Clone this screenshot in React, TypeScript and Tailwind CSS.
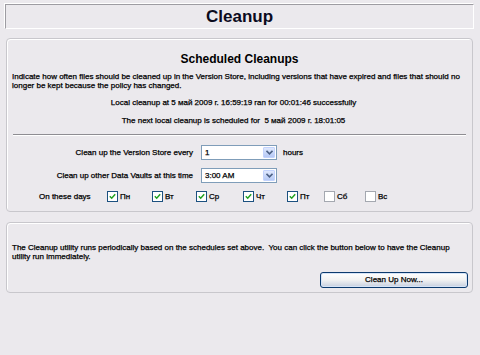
import React from 'react';

const days = [
  { label: 'Пн', checked: true, w: 'w-[45px]' },
  { label: 'Вт', checked: true, w: 'w-[44px]' },
  { label: 'Ср', checked: true, w: 'w-[47px]' },
  { label: 'Чт', checked: true, w: 'w-[44px]' },
  { label: 'Пт', checked: true, w: 'w-[37px]' },
  { label: 'Сб', checked: false, w: 'w-[41px]' },
  { label: 'Вс', checked: false, w: 'w-[30px]' },
];

const Select = ({ value }: { value: string }) => (
  <div className="flex h-[15px] w-[76px] border border-[#7f9db9] bg-white">
    <div className="flex flex-1 items-center pl-[3px] leading-none">{value}</div>
    <div className="m-[1px] flex w-[12px] items-center justify-center rounded-[1px] border border-[#c3d3fd] bg-gradient-to-b from-[#dfe8fd] to-[#b6c9f5]">
      <svg width="7" height="5" viewBox="0 0 7 5">
        <path d="M0.5 0.8 L3.5 3.8 L6.5 0.8" fill="none" stroke="#4d6185" strokeWidth="1.6" />
      </svg>
    </div>
  </div>
);

const Check = ({ checked }: { checked: boolean }) => (
  <div
    className={`flex h-[11px] w-[11px] items-center justify-center border bg-white ${
      checked ? 'border-[#1c5180]' : 'border-[#a4a8b0]'
    }`}
  >
    {checked && (
      <svg width="7" height="7" viewBox="0 0 7 7">
        <path d="M0.8 3.2 L2.7 5.2 L6.2 1.2" fill="none" stroke="#21a121" strokeWidth="1.5" />
      </svg>
    )}
  </div>
);

const App: React.FC = () => {
  return (
    <div className="h-[355px] w-[480px] overflow-hidden bg-[#ebe9ed] pt-[4px] font-['Liberation_Sans',Arial,sans-serif] text-[8px] text-black [-webkit-text-stroke:0.25px_#000]">
      {/* page title */}
      <div className="ml-[5px] flex h-[25px] w-[469px] items-center justify-center border border-t-[#9d9ca2] border-l-[#9d9ca2] border-b-white border-r-white shadow-[-1px_-1px_0_#ffffff] text-[17px] font-bold leading-none text-[#0b0b1e] [-webkit-text-stroke:0px]">
        Cleanup
      </div>

      {/* scheduled cleanups */}
      <div className="ml-[6px] mt-[9px] w-[467px] rounded-[4px] border border-[#c8c7cc] pb-[8px] shadow-[inset_1px_1px_0_#ffffff]">
        <div className="mt-[13px] h-[14px] text-center text-[12px] font-bold leading-[14px] [-webkit-text-stroke:0px]">Scheduled Cleanups</div>
        <p className="mt-[6px] px-[5px] leading-[9px]">
          Indicate how often files should be cleaned up in the Version Store, including versions that have expired and files that should no longer be kept because the policy has changed.
        </p>
        <div className="mt-[8px] pr-[12px] text-center leading-[9px]">
          Local cleanup at 5 май 2009 г. 16:59:19 ran for 00:01:46 successfully
        </div>
        <div className="mt-[9px] pr-[12px] text-center leading-[9px] whitespace-pre">
          The next local cleanup is scheduled for  5 май 2009 г. 18:01:05
        </div>
        <div className="mx-[6px] mt-[9px] border-t border-b border-t-[#8e8d92] border-b-white" />

        <div className="mt-[9px] flex items-center">
          <div className="w-[186px] text-right">Clean up the Version Store every</div>
          <div className="ml-[8px]">
            <Select value="1" />
          </div>
          <div className="ml-[6px]">hours</div>
        </div>
        <div className="mt-[8px] flex items-center">
          <div className="w-[186px] text-right">Clean up other Data Vaults at this time</div>
          <div className="ml-[8px]">
            <Select value="3:00 AM" />
          </div>
        </div>
        <div className="mt-[7px] flex h-[13px] items-center pl-[32px]">
          <div className="w-[68px]">On these days</div>
          {days.map((d) => (
            <div key={d.label} className={`flex items-center gap-[2px] ${d.w}`}>
              <Check checked={d.checked} />
              <span>{d.label}</span>
            </div>
          ))}
        </div>
      </div>

      {/* run now */}
      <div className="ml-[6px] mt-[10px] w-[467px] rounded-[4px] border border-[#c8c7cc] pb-[4px] pt-[20px] shadow-[inset_1px_1px_0_#ffffff]">
        <p className="px-[5px] leading-[9px]">
          The Cleanup utility runs periodically based on the schedules set above.&nbsp; You can click the button below to have the Cleanup utility run immediately.
        </p>
        <div className="mt-[11px] flex justify-end pr-[4px]">
          <button className="h-[16px] w-[148px] rounded-[3px] border border-[#0c3a6e] bg-gradient-to-b from-white via-[#f2f2f2] to-[#c6cfdf] leading-none shadow-[inset_0_0_0_1px_#d6e4f7]">
            Clean Up Now...
          </button>
        </div>
      </div>
    </div>
  );
};

export default App;
